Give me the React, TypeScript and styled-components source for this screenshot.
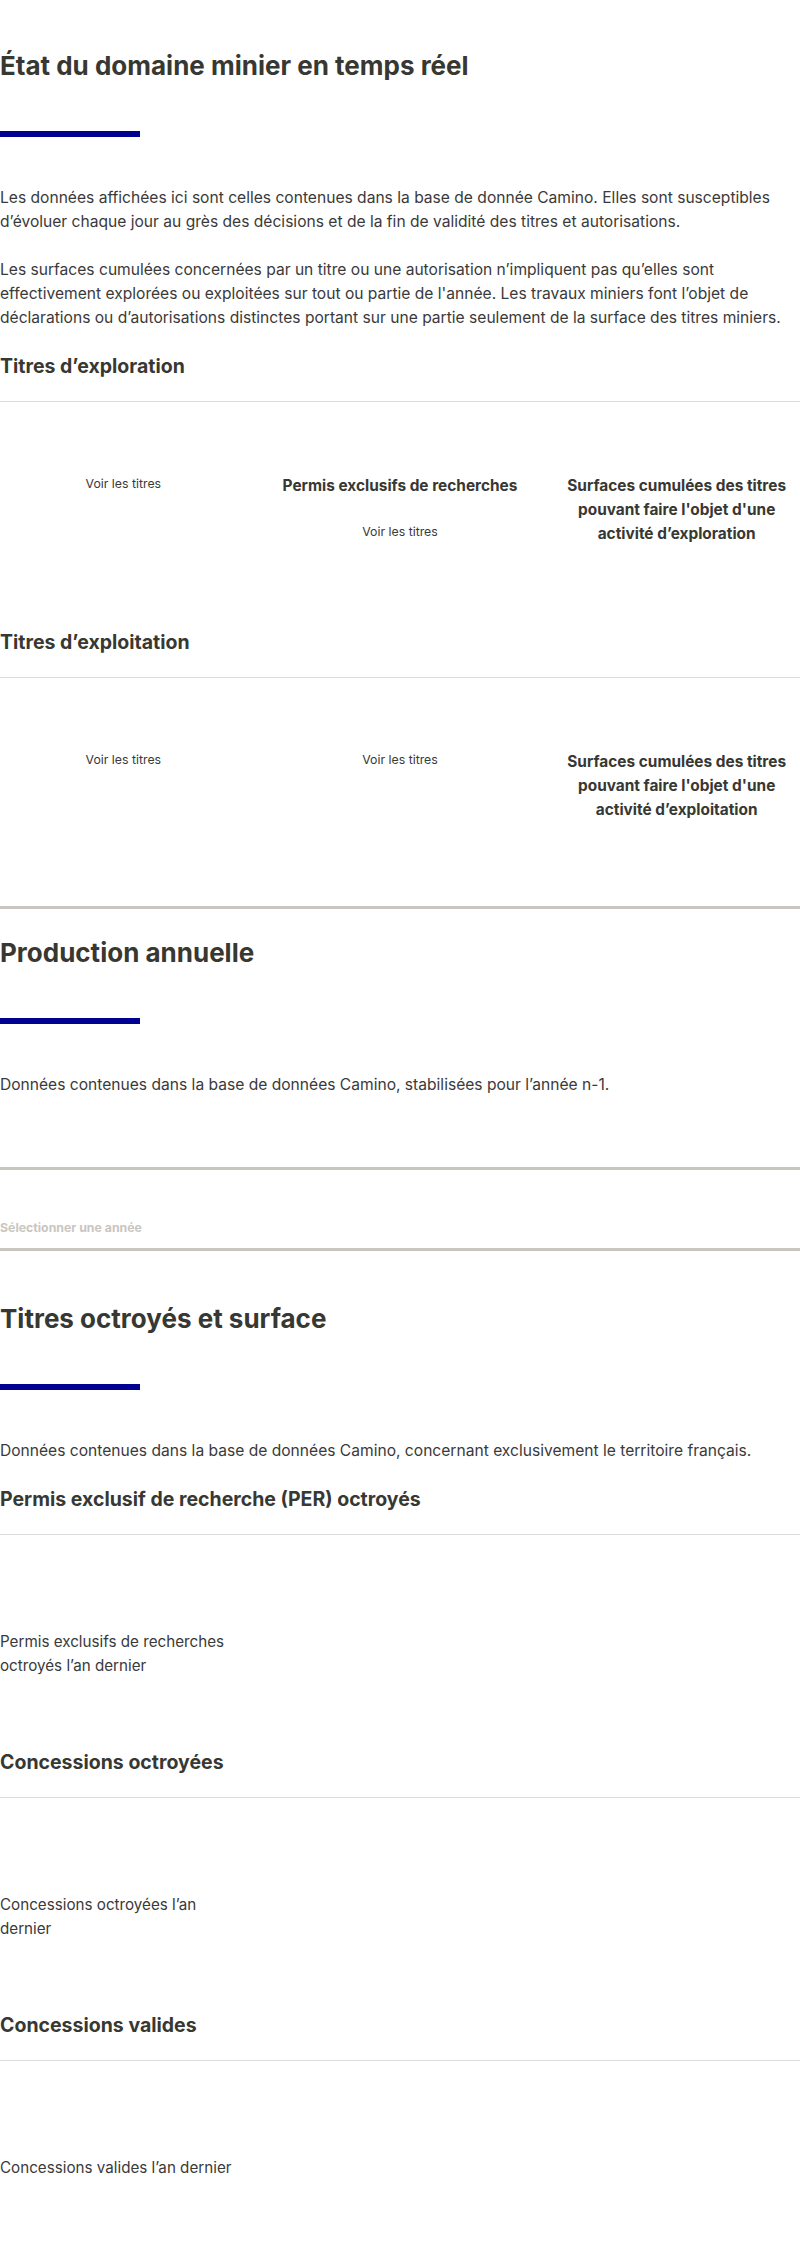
import React from "react";
import styled, { createGlobalStyle } from "styled-components";

const GlobalStyle = createGlobalStyle`
  html, body {
    margin: 0;
    padding: 0;
    background: #ffffff;
  }
  body {
    font-family: Inter, "Liberation Sans", Arial, sans-serif;
    color: #3a3a3a;
    overflow-x: hidden;
  }
  *, *::before, *::after {
    box-sizing: border-box;
  }
`;

const Page = styled.main`
  width: 800px;
  padding-bottom: 25px;
`;

const Section = styled.section<{ $top: number; $bottom?: number; $divider?: boolean }>`
  padding: ${(p) => p.$top}px 0 ${(p) => p.$bottom ?? 0}px;
  border-top: ${(p) => (p.$divider ? "3px solid #c9c6bf" : "0")};
`;

const Title = styled.h1`
  margin: 0;
  font-size: 26px;
  line-height: 32px;
  font-weight: 700;
  color: #383833;
`;

const Accent = styled.div`
  width: 140px;
  height: 6px;
  margin: 49px 0;
  background: #000091;
`;

const Lead = styled.p`
  margin: 0;
  font-size: 15.6px;
  line-height: 24px;
  color: #3a3a3a;

  & + & {
    margin-top: 24px;
  }
`;

const SubTitle = styled.h3`
  margin: 22px 0 21px;
  font-size: 19.5px;
  line-height: 28px;
  font-weight: 700;
  color: #383833;
`;

const Rule = styled.hr`
  margin: 0;
  border: 0;
  border-top: 1px solid #dddddd;
`;

const StatGrid = styled.div<{ $variant: "center" | "start" }>`
  display: grid;
  grid-template-columns: repeat(3, 1fr);
  column-gap: 30px;
  padding: ${(p) => (p.$variant === "center" ? "72px 0 60px" : "95px 0 48px")};
`;

const StatCell = styled.div<{ $align: "center" | "start" }>`
  display: flex;
  flex-direction: column;
  align-items: ${(p) => (p.$align === "center" ? "center" : "flex-start")};
  text-align: ${(p) => (p.$align === "center" ? "center" : "left")};
  min-width: 0;
`;

const StatLabel = styled.h6`
  margin: 0;
  font-size: 15.4px;
  line-height: 24px;
  font-weight: 700;
  color: #383833;
`;

const StatCaption = styled.p`
  margin: 0;
  font-size: 15.2px;
  line-height: 24px;
  color: #3a3a3a;
`;

const TitlesLink = styled.a`
  display: block;
  font-size: 12.3px;
  line-height: 20px;
  color: #3a3a3a;
  text-decoration: none;
  cursor: pointer;

  h6 + & {
    margin-top: 24px;
  }
`;

const YearSelect = styled.div`
  margin-top: 70px;
  border-top: 3px solid #c9c6bf;
  border-bottom: 3px solid #c9c6bf;
  padding: 48px 0 10px;
  font-size: 12.3px;
  line-height: 20px;
  font-weight: 700;
  color: #c9c6bf;
`;

type Cell = { label?: string; link?: boolean };

function CenterGrid({ cells }: { cells: Cell[] }) {
  return (
    <StatGrid $variant="center">
      {cells.map((c, i) => (
        <StatCell key={i} $align="center">
          {c.label && <StatLabel>{c.label}</StatLabel>}
          {c.link && <TitlesLink>Voir les titres</TitlesLink>}
        </StatCell>
      ))}
    </StatGrid>
  );
}

function CaptionGrid({ caption }: { caption: string }) {
  return (
    <StatGrid $variant="start">
      <StatCell $align="start">
        <StatCaption>{caption}</StatCaption>
      </StatCell>
      <StatCell $align="start" />
      <StatCell $align="start" />
    </StatGrid>
  );
}

export default function App() {
  return (
    <>
      <GlobalStyle />
      <Page>
        <Section $top={50} $bottom={24}>
          <Title>État du domaine minier en temps réel</Title>
          <Accent />
          <Lead>
            Les données affichées ici sont celles contenues dans la base de donnée Camino. Elles sont
            susceptibles d’évoluer chaque jour au grès des décisions et de la fin de validité des titres
            et autorisations.
          </Lead>
          <Lead>
            Les surfaces cumulées concernées par un titre ou une autorisation n’impliquent pas qu’elles
            sont effectivement explorées ou exploitées sur tout ou partie de l'année. Les travaux
            miniers font l’objet de déclarations ou d’autorisations distinctes portant sur une partie
            seulement de la surface des titres miniers.
          </Lead>

          <SubTitle>Titres d’exploration</SubTitle>
          <Rule />
          <CenterGrid
            cells={[
              { link: true },
              { label: "Permis exclusifs de recherches", link: true },
              { label: "Surfaces cumulées des titres pouvant faire l'objet d'une activité d’exploration" },
            ]}
          />

          <SubTitle>Titres d’exploitation</SubTitle>
          <Rule />
          <CenterGrid
            cells={[
              { link: true },
              { link: true },
              { label: "Surfaces cumulées des titres pouvant faire l'objet d'une activité d’exploitation" },
            ]}
          />
        </Section>

        <Section $top={28} $divider>
          <Title>Production annuelle</Title>
          <Accent />
          <Lead>Données contenues dans la base de données Camino, stabilisées pour l’année n-1.</Lead>
          <YearSelect>Sélectionner une année</YearSelect>
        </Section>

        <Section $top={52}>
          <Title>Titres octroyés et surface</Title>
          <Accent />
          <Lead>
            Données contenues dans la base de données Camino, concernant exclusivement le territoire
            français.
          </Lead>

          <SubTitle>Permis exclusif de recherche (PER) octroyés</SubTitle>
          <Rule />
          <CaptionGrid caption="Permis exclusifs de recherches octroyés l’an dernier" />

          <SubTitle>Concessions octroyées</SubTitle>
          <Rule />
          <CaptionGrid caption="Concessions octroyées l’an dernier" />

          <SubTitle>Concessions valides</SubTitle>
          <Rule />
          <CaptionGrid caption="Concessions valides l’an dernier" />
        </Section>
      </Page>
    </>
  );
}
